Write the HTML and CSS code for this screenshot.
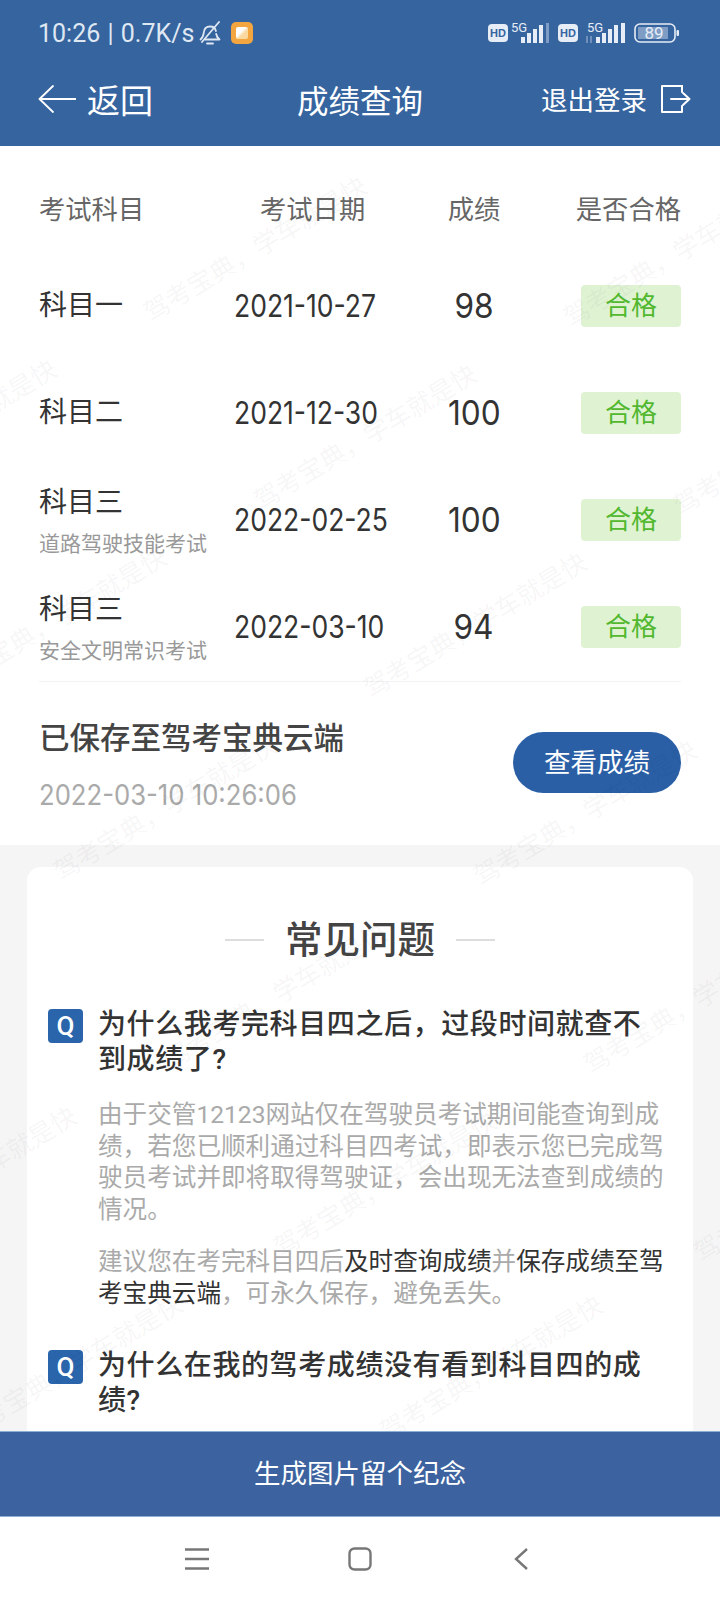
FILE: index.html
```html
<!DOCTYPE html>
<html lang="zh-CN">
<head>
    <meta charset="UTF-8" />
    <meta name="viewport" content="width=device-width, initial-scale=1.0" />
    <title>成绩查询</title>
    <link rel="stylesheet" href="styles.css">
</head>
<body>
    <!-- Header -->
    <header class="app-header">
        <div class="status-bar">
            <div class="status-left">
                <span class="status-text">10:26 | 0.7K/s</span>
                <svg class="bell-icon" width="22" height="24" viewBox="0 0 22 24" fill="none" stroke="#dfe8f2" stroke-width="1.800" stroke-linecap="round" stroke-linejoin="round">
                    <path d="M1.500 18.500c2.500-2 3-4 3.300-7 .3-3.500 2.700-6 6.200-6s5.400 2 5.900 4.500"/>
                    <path d="M17.200 13c.4 2.500 1.400 4 3.300 5.500H6"/>
                    <path d="M8 22.500h6"/>
                    <path d="M3 21 20 1"/>
                </svg>
                <span class="app-dot"><span class="app-dot-inner"></span></span>
            </div>
            <svg class="status-right" width="192" height="24" viewBox="0 0 192 24">
                <rect x="0" y="3" width="20" height="18" rx="4" fill="#e6edf6"/>
                <text x="10" y="16" class="hd-text" text-anchor="middle">HD</text>
                <text x="23" y="11" class="fiveg-text">5G</text>
                <rect x="33" y="16" width="4" height="6" fill="#e6edf6"/>
                <rect x="39" y="12" width="4" height="10" fill="#e6edf6"/>
                <rect x="45" y="8" width="4" height="14" fill="#e6edf6"/>
                <rect x="51" y="4" width="4" height="18" fill="#e6edf6"/>
                <rect x="58" y="2" width="3" height="20" fill="#7f9dc4"/>

                <rect x="70" y="3" width="20" height="18" rx="4" fill="#e6edf6"/>
                <text x="80" y="16" class="hd-text" text-anchor="middle">HD</text>
                <text x="99" y="11" class="fiveg-text">5G</text>
                <path d="M99 15v7M103 15v7" stroke="#8fa9cb" stroke-width="1.300"/>
                <rect x="108" y="16" width="4" height="6" fill="#e6edf6"/>
                <rect x="114" y="12" width="4" height="10" fill="#e6edf6"/>
                <rect x="120" y="8" width="4" height="14" fill="#e6edf6"/>
                <rect x="126" y="4" width="4" height="18" fill="#e6edf6"/>
                <rect x="133" y="2" width="4" height="20" fill="#e6edf6"/>

                <rect x="147" y="3" width="40" height="18" rx="5" fill="none" stroke="#e6edf6" stroke-width="1.600"/>
                <rect x="150" y="6" width="30" height="12" fill="#7f9dc4"/>
                <text x="166" y="18" class="battery-text" text-anchor="middle">89</text>
                <rect x="188.500" y="9" width="2.500" height="6" rx="1" fill="#e6edf6"/>
            </svg>
        </div>
        <nav class="nav-bar">
            <a href="#" class="nav-back">
                <svg width="38" height="28" viewBox="0 0 38 28" fill="none" stroke="#fff" stroke-width="1.800" stroke-linecap="round" stroke-linejoin="round">
                    <path d="M38 14H1.500M15 1 1.500 14 15 27"/>
                </svg>
                <span>返回</span>
            </a>
            <h1 class="nav-title">成绩查询</h1>
            <a href="#" class="nav-logout">
                <span>退出登录</span>
                <svg width="30" height="28" viewBox="0 0 30 28" fill="none" stroke="#fff" stroke-width="2" stroke-linecap="round" stroke-linejoin="round">
                    <path d="M21 1H1v26h20v-6"/>
                    <path d="M21 1v6"/>
                    <path d="M10 14h18M22 8l6.500 6-6.500 6"/>
                </svg>
            </a>
        </nav>
    </header>

    <!-- Main Content -->
    <main class="main-container">
        <section class="score-section">
            <div class="score-head">
                <span>考试科目</span>
                <span class="head-date">考试日期</span>
                <span class="cell-score">成绩</span>
                <span class="cell-pass">是否合格</span>
            </div>

            <div class="score-row">
                <div class="subject">科目一</div>
                <div class="exam-date"><span class="tall-num">2021-10-27</span></div>
                <div class="cell-score"><span class="score-num">98</span></div>
                <div class="cell-pass"><span class="pass-badge">合格</span></div>
            </div>
            <div class="score-row">
                <div class="subject">科目二</div>
                <div class="exam-date"><span class="tall-num">2021-12-30</span></div>
                <div class="cell-score"><span class="score-num">100</span></div>
                <div class="cell-pass"><span class="pass-badge">合格</span></div>
            </div>
            <div class="score-row">
                <div class="subject subject-two-line">科目三<small class="subject-note">道路驾驶技能考试</small></div>
                <div class="exam-date"><span class="tall-num">2022-02-25</span></div>
                <div class="cell-score"><span class="score-num">100</span></div>
                <div class="cell-pass"><span class="pass-badge">合格</span></div>
            </div>
            <div class="score-row">
                <div class="subject subject-two-line">科目三<small class="subject-note">安全文明常识考试</small></div>
                <div class="exam-date"><span class="tall-num">2022-03-10</span></div>
                <div class="cell-score"><span class="score-num">94</span></div>
                <div class="cell-pass"><span class="pass-badge">合格</span></div>
            </div>

            <div class="saved-row">
                <div>
                    <div class="saved-title">已保存至驾考宝典云端</div>
                    <div class="saved-time"><span class="tall-num">2022-03-10 10:26:06</span></div>
                </div>
                <a href="#" class="view-btn">查看成绩</a>
            </div>
        </section>

        <section class="faq-section">
            <div class="faq-card">
                <h2 class="faq-title">常见问题</h2>

                <div class="faq-question">
                    <span class="q-mark">Q</span>
                    <h3>为什么我考完科目四之后，过段时间就查不到成绩了?</h3>
                </div>
                <div class="faq-answer">
                    <p>由于交管12123网站仅在驾驶员考试期间能查询到成绩，若您已顺利通过科目四考试，即表示您已完成驾驶员考试并即将取得驾驶证，会出现无法查到成绩的情况。</p>
                    <p>建议您在考完科目四后<b>及时查询成绩</b>并<b>保存成绩至驾考宝典云端</b>，可永久保存，避免丢失。</p>
                </div>

                <div class="faq-question">
                    <span class="q-mark">Q</span>
                    <h3>为什么在我的驾考成绩没有看到科目四的成绩?</h3>
                </div>
            </div>
        </section>

        <!-- Watermark lies over the content -->
        <div class="watermarks">
            <span class="wm wm-1">驾考宝典，学车就是快</span>
            <span class="wm wm-2">驾考宝典，学车就是快</span>
            <span class="wm wm-3">驾考宝典，学车就是快</span>
            <span class="wm wm-4">驾考宝典，学车就是快</span>
            <span class="wm wm-5">驾考宝典，学车就是快</span>
            <span class="wm wm-6">驾考宝典，学车就是快</span>
            <span class="wm wm-7">驾考宝典，学车就是快</span>
            <span class="wm wm-8">驾考宝典，学车就是快</span>
            <span class="wm wm-9">驾考宝典，学车就是快</span>
            <span class="wm wm-10">驾考宝典，学车就是快</span>
            <span class="wm wm-11">驾考宝典，学车就是快</span>
            <span class="wm wm-12">驾考宝典，学车就是快</span>
            <span class="wm wm-13">驾考宝典，学车就是快</span>
            <span class="wm wm-14">驾考宝典，学车就是快</span>
            <span class="wm wm-15">驾考宝典，学车就是快</span>
            <span class="wm wm-16">驾考宝典，学车就是快</span>
        </div>
    </main>

    <a href="#" class="keep-bar">生成图片留个纪念</a>

    <!-- System navigation -->
    <div class="system-nav">
        <svg width="24" height="22" viewBox="0 0 24 22" fill="none" stroke="#777" stroke-width="2.400">
            <path d="M0 1.500h24M0 11h24M0 20.500h24"/>
        </svg>
        <svg width="24" height="24" viewBox="0 0 24 24" fill="none" stroke="#777" stroke-width="2.400">
            <rect x="1.500" y="1.500" width="21" height="21" rx="5"/>
        </svg>
        <svg width="14" height="22" viewBox="0 0 14 22" fill="none" stroke="#777" stroke-width="2.400">
            <path d="M13 1 2 11l11 10"/>
        </svg>
    </div>
</body>
</html>
```

FILE: styles.css
```css
* {
    box-sizing: border-box;
    margin: 0;
    padding: 0;
}

html, body {
    height: 1600px;
    overflow: hidden;
}

body {
    display: flex;
    flex-direction: column;
    background-color: #fff;
    color: #333;
    font-family: Roboto, "Noto Sans CJK SC", sans-serif;
}

a {
    color: inherit;
    text-decoration: none;
}

/* Header */
.app-header {
    height: 146px;
    flex: none;
    background: #36649f;
    color: #fff;
}

.status-bar {
    height: 66px;
    padding: 0 40px 0 38px;
    display: flex;
    align-items: center;
    justify-content: space-between;
}

.status-left {
    display: flex;
    align-items: center;
}

.status-text {
    font-size: 25px;
    word-spacing: 1px;
    color: #dfe8f2;
    width: 161px;
    white-space: nowrap;
}

.bell-icon {
    margin-right: 10px;
}

.app-dot {
    width: 22px;
    height: 22px;
    border-radius: 5px;
    background: #f3a53f;
    display: flex;
    align-items: center;
    justify-content: center;
}

.app-dot-inner {
    width: 12px;
    height: 12px;
    border-radius: 2px;
    background: linear-gradient(135deg, #fff 40%, #f9d9a0 60%);
}

.hd-text {
    font: 700 11px "Liberation Sans", sans-serif;
    fill: #36649f;
}

.fiveg-text {
    font: 400 13px Roboto, sans-serif;
    fill: #e6edf6;
}

.battery-text {
    font: 400 17px Roboto, sans-serif;
    fill: #e6edf6;
}

.nav-bar {
    height: 65px;
    padding: 0 29px;
    display: grid;
    grid-template-columns: 1fr auto 1fr;
    align-items: center;
}

.nav-back {
    margin-left: 9px;
    display: flex;
    align-items: center;
    gap: 11px;
    font-size: 33px;
}

.nav-title {
    font-size: 31.500px;
    font-weight: 400;
}

.nav-logout {
    justify-self: end;
    display: flex;
    align-items: center;
    gap: 14px;
    font-size: 26.500px;
}

/* Main Content */
.main-container {
    position: relative;
    flex: 1;
    min-height: 0;
    overflow: hidden;
    background: #f5f5f5;
}

.score-section {
    height: 699px;
    padding: 42px 39px 0 39px;
    background: #fff;
}

.score-head,
.score-row {
    display: grid;
    grid-template-columns: 195px 171px 138px 138px;
    align-items: center;
}

.score-head {
    height: 36px;
    margin-bottom: 28px;
    font-size: 26.300px;
    color: #666;
}

.head-date {
    margin-left: 26px;
}

.cell-score {
    text-align: center;
}

.cell-pass {
    text-align: right;
}

.score-row {
    height: 107px;
}

.subject {
    font-size: 28px;
    line-height: 36px;
    color: #333;
}

.subject-two-line {
    padding-top: 4px;
}

.subject-note {
    display: block;
    margin-top: 9px;
    font-size: 21px;
    line-height: 28px;
    color: #999;
}

/* the reference digits are tall and narrow, with a thin 1 */
.tall-num {
    display: inline-block;
    font-family: Inter, sans-serif;
    white-space: nowrap;
    transform-origin: left center;
    transform: scaleX(0.855);
}

.exam-date {
    font-size: 31px;
    color: #333;
}

.score-num {
    display: inline-block;
    font-family: Inter, sans-serif;
    font-size: 34px;
    color: #333;
    transform: scaleX(0.93);
}

.pass-badge {
    display: inline-block;
    width: 100px;
    height: 42px;
    line-height: 42px;
    border-radius: 4px;
    background: #dff3d3;
    color: #52b82f;
    font-size: 26px;
    text-align: center;
}

.saved-row {
    margin-top: 1px;
    padding-top: 39px;
    border-top: 1px solid #f3f3f3;
    display: flex;
    justify-content: space-between;
    align-items: flex-start;
}

.saved-title {
    font-size: 30.500px;
    line-height: 36px;
    font-weight: 500;
    color: #444;
}

.saved-time {
    margin-top: 20px;
    font-size: 28px;
    line-height: 36px;
    color: #aaa;
}

.saved-time .tall-num {
    transform: scaleX(0.917);
}

.view-btn {
    margin-top: 11px;
    width: 168px;
    height: 61px;
    line-height: 61px;
    border-radius: 31px;
    background: #2a5fa6;
    color: #fff;
    font-size: 26.500px;
    text-align: center;
}

.faq-section {
    padding: 22px 27px 0 27px;
}

.faq-card {
    height: 620px;
    padding: 48px 21px 0;
    border-radius: 14px 14px 0 0;
    background: #fff;
}

.faq-title {
    height: 50px;
    line-height: 50px;
    margin-bottom: 42px;
    display: flex;
    align-items: center;
    justify-content: center;
    gap: 21px;
    font-size: 37.500px;
    font-weight: 500;
    color: #444;
}

.faq-title::before,
.faq-title::after {
    content: '';
    width: 39px;
    height: 2px;
    background: #ddd;
}

.faq-question {
    display: flex;
    align-items: flex-start;
    gap: 15px;
}

.q-mark {
    flex: none;
    width: 35px;
    height: 34px;
    margin-top: 2px;
    border-radius: 4px;
    background: #2a64ab;
    color: #fff;
    font-size: 26px;
    font-weight: 500;
    line-height: 34px;
    text-align: center;
}

.faq-question h3 {
    width: 556px;
    font-size: 28px;
    letter-spacing: 0.6px;
    line-height: 35px;
    font-weight: 500;
    color: #333;
}

.faq-answer {
    width: 572px;
    margin: 22px 0 39px 50px;
    font-size: 24.600px;
    line-height: 31.500px;
    color: #aaa;
}

.faq-answer p + p {
    margin-top: 21px;
}

.faq-answer b {
    font-weight: 400;
    color: #333;
}

/* Watermark */
.watermarks {
    position: absolute;
    inset: 0;
    pointer-events: none;
}

.wm {
    position: absolute;
    font-size: 25.500px;
    white-space: nowrap;
    color: rgba(0, 0, 0, 0.05);
    transform: translate(-50%, -50%) rotate(-31deg);
}

.wm-1 { left: 254px; top: 101px; }
.wm-2 { left: 674px; top: 106px; }
.wm-3 { left: 364px; top: 289px; }
.wm-4 { left: 784px; top: 294px; }
.wm-5 { left: -56px; top: 284px; }
.wm-6 { left: 474px; top: 477px; }
.wm-7 { left: 54px; top: 472px; }
.wm-8 { left: 584px; top: 665px; }
.wm-9 { left: 164px; top: 660px; }
.wm-10 { left: 694px; top: 853px; }
.wm-11 { left: 274px; top: 848px; }
.wm-12 { left: 384px; top: 1036px; }
.wm-13 { left: -36px; top: 1031px; }
.wm-14 { left: 490px; top: 1220px; }
.wm-15 { left: 70px; top: 1219px; }
.wm-16 { left: 804px; top: 1041px; }

/* Bottom bar */
.keep-bar {
    height: 86px;
    flex: none;
    border-top: 1px solid #8fb0d6;
    border-bottom: 1px solid #8fb0d6;
    background: #3c639f;
    color: #fff;
    font-size: 26.500px;
    line-height: 84px;
    text-align: center;
}

.system-nav {
    height: 83px;
    flex: none;
    background: #fff;
    display: flex;
    align-items: center;
}

.system-nav svg:nth-child(1) {
    margin-left: 185px;
}

.system-nav svg:nth-child(2) {
    margin-left: 139px;
}

.system-nav svg:nth-child(3) {
    margin-left: 142px;
}
```
